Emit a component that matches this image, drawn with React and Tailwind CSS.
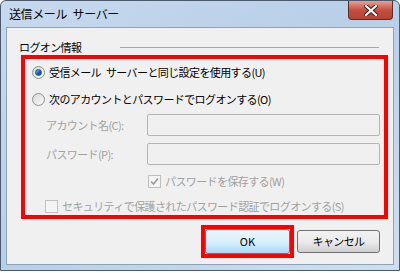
import React from "react";

const font = { fontFamily: '"Noto Sans CJK JP", "Noto Sans", sans-serif' };

function Radio({ checked }) {
  return (
    <div className="w-[13px] h-[13px] rounded-full border border-[#8e8f8f] bg-gradient-to-br from-[#d8d8d8] to-[#fbfbfb] flex items-center justify-center shrink-0">
      {checked && (
        <div className="w-[7px] h-[7px] rounded-full bg-gradient-to-br from-[#7fc3f5] via-[#1a66b8] to-[#0d3f80] border border-[#1b4f8a]" />
      )}
    </div>
  );
}

function Check({ checked }) {
  return (
    <div className="w-[13px] h-[13px] border border-[#c0c0c0] bg-[#f4f4f4] flex items-center justify-center shrink-0">
      {checked && (
        <svg width="9" height="9" viewBox="0 0 9 9">
          <path d="M1 4.5 L3.5 7 L8 1.5" fill="none" stroke="#9a9a9a" strokeWidth="1.6" />
        </svg>
      )}
    </div>
  );
}

export default function App() {
  return (
    <div className="w-[400px] h-[273px] bg-white text-[11px] tracking-[-0.6px] leading-none whitespace-nowrap" style={font}>
      <div className="w-[400px] h-[271px] rounded-t-[6px] border border-[#4a5a6c] bg-gradient-to-br from-[#c6d9ee] via-[#b8cfe8] to-[#cfdff0] flex flex-col">
        <div className="h-[26px] flex items-start justify-between">
          <div className="pl-[8px] pt-[7px] text-black text-[12px] tracking-[-0.4px]">{"送信メール\u2002サーバー"}</div>
          <div className="mr-[6px] w-[45px] h-[19px] rounded-b-[4px] border border-t-0 border-[#5c2b2b] bg-gradient-to-b from-[#e5a093] via-[#c5503f] to-[#b8412f] flex items-center justify-center">
            <svg width="14" height="11" viewBox="0 0 14 11">
              <path d="M2 1 L12 10 M12 1 L2 10" stroke="#3b1a1a" strokeWidth="4" strokeLinecap="square" />
              <path d="M2 1 L12 10 M12 1 L2 10" stroke="#ffffff" strokeWidth="2.2" strokeLinecap="square" />
            </svg>
          </div>
        </div>
        <div className="mx-[5px] h-[238px] border border-[#8fa3b8] bg-[#f0f0f0] flex flex-col">
          <div className="flex items-center mt-[12px] ml-[12px] mr-[14px] h-[14px]">
            <div className="w-[101px] text-black">ログオン情報</div>
            <div className="flex-1 h-px bg-[#a8a8a8]" />
          </div>
          <div className="mt-[1px] ml-[14px] w-[367px] h-[164px] border-4 border-[#ff0000] flex flex-col">
            <div className="flex items-center h-[20px] mt-[3px] ml-[7px] gap-[4px]">
              <Radio checked />
              <span className="text-black">{"受信メール\u2002サーバーと同じ設定を使用する(U)"}</span>
            </div>
            <div className="flex items-center h-[20px] mt-[7px] ml-[7px] gap-[4px]">
              <Radio />
              <span className="text-black">次のアカウントとパスワードでログオンする(O)</span>
            </div>
            <div className="flex items-center h-[22px] mt-[5px]">
              <span className="w-[122px] pl-[21px] text-[#a0a0a0]">アカウント名(C):</span>
              <div className="w-[233px] h-[22px] border border-[#b5b5b5] rounded-[2px] bg-[#f0f0f0]" />
            </div>
            <div className="flex items-center h-[22px] mt-[7px]">
              <span className="w-[122px] pl-[21px] text-[#a0a0a0]">パスワード(P):</span>
              <div className="w-[233px] h-[22px] border border-[#b5b5b5] rounded-[2px] bg-[#f0f0f0]" />
            </div>
            <div className="flex items-center h-[13px] mt-[10px] ml-[123px] gap-[4px]">
              <Check checked />
              <span className="text-[#a0a0a0]">パスワードを保存する(W)</span>
            </div>
            <div className="flex items-center h-[13px] mt-[12px] ml-[20px] gap-[4px]">
              <Check />
              <span className="text-[#a0a0a0]">セキュリティで保護されたパスワード認証でログオンする(S)</span>
            </div>
          </div>
          <div className="flex items-center mt-[6px] ml-[194px] gap-[3px]">
            <div className="w-[93px] h-[33px] border-4 border-[#ff0000] p-0">
              <div className="w-full h-full border border-[#3c7fb1] rounded-[3px] bg-gradient-to-b from-[#eaf6fd] via-[#d9f0fc] to-[#a7d9f5] flex items-center justify-center text-black tracking-normal">
                OK
              </div>
            </div>
            <div className="w-[83px] h-[23px] border border-[#707070] rounded-[3px] bg-gradient-to-b from-[#f2f2f2] via-[#ebebeb] to-[#cfcfcf] flex items-center justify-center text-black">
              キャンセル
            </div>
          </div>
        </div>
      </div>
    </div>
  );
}
